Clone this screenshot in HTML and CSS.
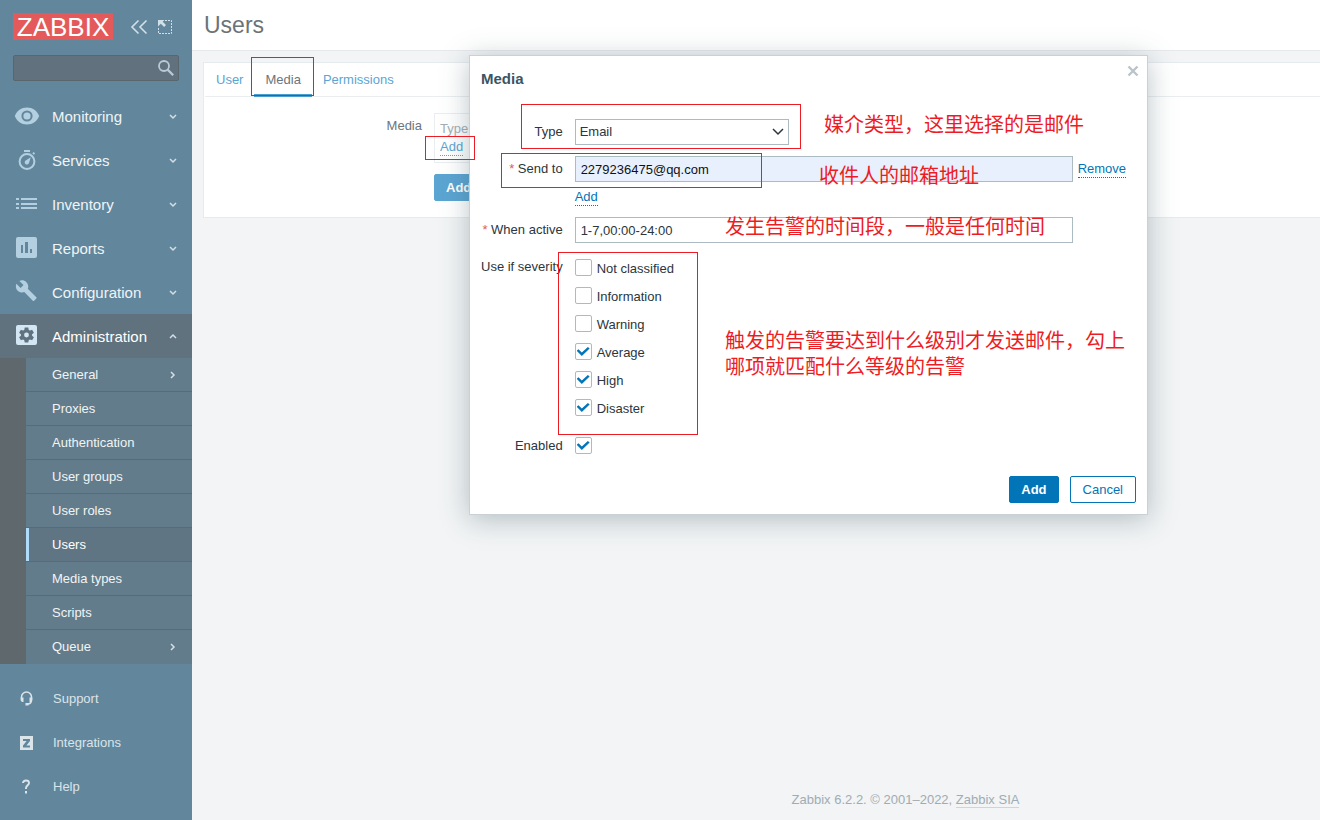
FILE: index.html
```html
<!DOCTYPE html>
<html lang="en">
<head>
<meta charset="utf-8">
<title>Users</title>
<link rel="stylesheet" href="styles.css">
</head>
<body>
<div class="layout">
  <aside class="sidebar">
    <div class="brand">
      <a class="logo" href="#">ZABBIX</a>
      <button class="icon-btn" type="button" aria-label="Collapse sidebar">
        <svg width="18" height="16" viewBox="0 0 18 16" fill="none" stroke="currentColor" stroke-width="1.600"><path d="M8.500 1.500 2 8l6.500 6.500M16.500 1.500 10 8l6.500 6.500"/></svg>
      </button>
      <button class="icon-btn" type="button" aria-label="Hide sidebar">
        <svg width="16" height="16" viewBox="0 0 16 16" fill="none" stroke="currentColor"><path stroke-dasharray="2 1" d="M8 1.500h6.500v13h-13V8"/><path fill="currentColor" stroke="none" d="M1 1h6.500L5.700 2.800l3.300 3.300L7.100 8 3.800 4.700 1 7.500z"/></svg>
      </button>
    </div>
    <form class="search" role="search">
      <input type="text" aria-label="Search">
      <button type="button" aria-label="Search">
        <svg width="18" height="18" viewBox="0 0 18 18" fill="none" stroke="currentColor" stroke-width="1.800"><circle cx="7" cy="7" r="5"/><path d="m10.600 10.600 5.600 5.600" stroke-width="2.200"/></svg>
      </button>
    </form>
    <nav class="menu">
      <a class="menu-item" href="#">
        <svg class="ico" width="26" height="20" viewBox="0 0 26 20"><path fill="currentColor" fill-rule="evenodd" d="M13 1.500C7.500 1.500 2.700 4.900.8 10c1.900 5.100 6.700 8.500 12.200 8.500S23.300 15.100 25.200 10C23.300 4.900 18.500 1.500 13 1.500zm0 2.900a5.600 5.600 0 1 1 0 11.200 5.600 5.600 0 0 1 0-11.200z"/><circle cx="13" cy="10" r="3.600" fill="currentColor"/></svg>
        <span>Monitoring</span><svg class="chev" width="10" height="10" viewBox="0 0 10 10"><path d="m2 4 3 3 3-3"/></svg>
      </a>
      <a class="menu-item" href="#">
        <svg class="ico" width="26" height="22" viewBox="0 0 26 22"><circle cx="13" cy="12.500" r="7.400" fill="none" stroke="currentColor" stroke-width="2"/><path fill="currentColor" d="M10 1h6v2h-6zM18.300 4.200l1.400-1.200 1.400 1.600-1.300 1.200zM16.800 8.200l-1.900 6a2.200 2.200 0 1 1-3.300-2.700z"/></svg>
        <span>Services</span><svg class="chev" width="10" height="10" viewBox="0 0 10 10"><path d="m2 4 3 3 3-3"/></svg>
      </a>
      <a class="menu-item" href="#">
        <svg class="ico" width="26" height="20" viewBox="0 0 26 20"><path fill="currentColor" d="M2 4h3v2H2zM2 9h3v2H2zM2 13h3v2H2zM7 4h16v2H7zM7 9h16v2H7zM7 13h16v2H7z"/></svg>
        <span>Inventory</span><svg class="chev" width="10" height="10" viewBox="0 0 10 10"><path d="m2 4 3 3 3-3"/></svg>
      </a>
      <a class="menu-item" href="#">
        <svg class="ico" width="26" height="24" viewBox="0 0 26 24"><path fill="currentColor" fill-rule="evenodd" d="M4 1h17a2 2 0 0 1 2 2v17a2 2 0 0 1-2 2H4a2 2 0 0 1-2-2V3a2 2 0 0 1 2-2zm3 8v8h2V9zm4-3v11h3V6zm5 7v4h2v-4z"/></svg>
        <span>Reports</span><svg class="chev" width="10" height="10" viewBox="0 0 10 10"><path d="m2 4 3 3 3-3"/></svg>
      </a>
      <a class="menu-item" href="#">
        <svg class="ico" width="26" height="24" viewBox="0 0 26 24"><path fill="currentColor" d="m22.300 17.300-8.500-8.500c.9-2.300.4-4.800-1.400-6.600C10.500.3 7.700-.1 5.400.9l4.100 4.100-2.900 2.900-4.200-4.200C1.400 6 1.800 8.900 3.700 10.700c1.800 1.800 4.400 2.300 6.600 1.400l8.500 8.600c.4.400 1 .4 1.300 0l2.200-2.200c.4-.3.400-.9 0-1.200z"/></svg>
        <span>Configuration</span><svg class="chev" width="10" height="10" viewBox="0 0 10 10"><path d="m2 4 3 3 3-3"/></svg>
      </a>
      <a class="menu-item menu-item-open" href="#">
        <svg class="ico" width="26" height="24" viewBox="1 0 26 24"><rect x="3" y="1" width="21" height="20" rx="2" fill="currentColor"/><g class="gear"><circle cx="13.500" cy="11" r="5.600"/><path d="M11.700 3.500h3.600l.6 3.500h-4.800zM11.700 18.500h3.600l.6-3.500h-4.800zM6.100 8.800l1.800-3.100 3.400 1.300-2.500 4.100zM20.900 8.800l-1.800-3.100L15.700 7l2.500 4.100zM6.100 13.200l1.800 3.100 3.400-1.300-2.500-4.100zM20.900 13.200l-1.800 3.100-3.400-1.300 2.500-4.100z"/></g><circle cx="13.500" cy="11" r="2.400" fill="currentColor"/></svg>
        <span>Administration</span><svg class="chev" width="10" height="10" viewBox="0 0 10 10"><path d="m2 7 3-3 3 3"/></svg>
      </a>
      <div class="submenu">
        <a href="#">General<svg class="chev" width="10" height="10" viewBox="0 0 10 10"><path d="m3 2 3 3-3 3"/></svg></a>
        <a href="#">Proxies</a>
        <a href="#">Authentication</a>
        <a href="#">User groups</a>
        <a href="#">User roles</a>
        <a class="current" href="#">Users</a>
        <a href="#">Media types</a>
        <a href="#">Scripts</a>
        <a href="#">Queue<svg class="chev" width="10" height="10" viewBox="0 0 10 10"><path d="m3 2 3 3-3 3"/></svg></a>
      </div>
    </nav>
    <nav class="links">
      <a href="#"><svg width="14" height="16" viewBox="0 0 14 16"><path fill="none" stroke="currentColor" stroke-width="1.500" d="M1.500 8.500V6a5 5 0 0 1 10 0v2.500c0 3-1.500 4.500-4 4.500"/><path fill="currentColor" d="M.7 6.500h2.800V11H2L.7 9.500zM12.300 6.500H9.500V11H11l1.300-1.500zM5.500 12h3v2.500h-3z"/></svg>Support</a>
      <a href="#"><svg width="14" height="16" viewBox="0 0 14 16"><path fill="currentColor" fill-rule="evenodd" d="M0 1h13v14H0zm3 3v2h3.600L3 10.600V12.500h7v-2H6.400L10 6V4z"/></svg>Integrations</a>
      <a href="#"><svg width="14" height="16" viewBox="0 0 14 16"><path fill="none" stroke="currentColor" stroke-width="1.900" d="M3 4c0-2 1.500-2.500 3-2.500s3 .6 3 2.400C9 6 6 6.500 6 9v1"/><path fill="currentColor" d="M5 12h2v2.500H5z"/></svg>Help</a>
    </nav>
  </aside>

  <main class="page">
    <header class="page-head"><h1>Users</h1></header>
    <section class="card">
      <nav class="tabs">
        <a href="#">User</a>
        <a class="active" href="#">Media</a>
        <a href="#">Permissions</a>
      </nav>
      <div class="card-form">
        <span class="card-label">Media</span>
        <div class="media-box">
          <table><tr><th scope="col">Type</th></tr></table>
          <a class="dotted" href="#">Add</a>
        </div>
        <button class="btn btn-dim" type="button">Add</button>
      </div>
    </section>
    <footer class="page-foot">Zabbix 6.2.2. © 2001–2022, <a href="#">Zabbix SIA</a></footer>
  </main>
</div>

<div class="dialog" role="dialog" aria-labelledby="dialog-title">
  <div class="dialog-head">
    <h2 id="dialog-title">Media</h2>
    <button type="button" class="close" aria-label="Close"><svg width="12" height="12" viewBox="0 0 12 12" fill="none" stroke="currentColor" stroke-width="2.400"><path d="m1.500 1.500 9 9M10.500 1.500l-9 9"/></svg></button>
  </div>
  <form class="fields">
    <label for="type">Type</label>
    <div class="select">
      <select id="type"><option>Email</option></select>
      <svg width="12" height="8" viewBox="0 0 12 8" fill="none" stroke="currentColor" stroke-width="1.500"><path d="m1 1 5 5 5-5"/></svg>
    </div>

    <label class="required" for="sendto">Send to</label>
    <div>
      <div class="send-row"><input id="sendto" class="text filled" type="text" value="2279236475@qq.com"><a class="dotted" href="#">Remove</a></div>
      <div class="add-row"><a class="dotted" href="#">Add</a></div>
    </div>

    <label class="required" for="active">When active</label>
    <input id="active" class="text" type="text" value="1-7,00:00-24:00">

    <span class="field-label" id="severity">Use if severity</span>
    <div class="checks" role="group" aria-labelledby="severity">
      <label><input type="checkbox">Not classified</label>
      <label><input type="checkbox">Information</label>
      <label><input type="checkbox">Warning</label>
      <label><input type="checkbox" checked>Average</label>
      <label><input type="checkbox" checked>High</label>
      <label><input type="checkbox" checked>Disaster</label>
    </div>

    <label for="enabled">Enabled</label>
    <div class="check-cell"><input id="enabled" type="checkbox" checked></div>
  </form>
  <div class="dialog-foot">
    <button class="btn" type="button">Add</button>
    <button class="btn btn-alt" type="button">Cancel</button>
  </div>
</div>

<div class="notes" lang="zh-CN">
  <i class="frame frame-tab"></i>
  <i class="frame frame-add"></i>
  <i class="frame frame-type"></i>
  <i class="frame frame-send"></i>
  <i class="frame frame-severity"></i>
  <p class="note note-type">媒介类型，这里选择的是邮件</p>
  <p class="note note-send">收件人的邮箱地址</p>
  <p class="note note-active">发生告警的时间段，一般是任何时间</p>
  <p class="note note-severity">触发的告警要达到什么级别才发送邮件，勾上<br>哪项就匹配什么等级的告警</p>
</div>
</body>
</html>
```
FILE: styles.css
```css
* { box-sizing: border-box; }

body {
  margin: 0;
  position: relative;
  font: 13px/16px "Liberation Sans", Arial, sans-serif;
  color: #2b363d;
  background: #f2f4f5;
}

a { color: inherit; text-decoration: none; }
button, input, select { font: inherit; color: inherit; }
button { cursor: pointer; }
svg { display: block; flex: none; }
h1, h2, p { margin: 0; }

.layout { display: flex; min-height: 100vh; }

/* Sidebar */
.sidebar {
  display: flex;
  flex-direction: column;
  flex: none;
  width: 192px;
  background: #62879d;
  color: #f0f4f6;
}

.brand { display: flex; align-items: center; gap: 9px; padding: 13px 0 0 13px; }

.logo {
  flex: none;
  width: 100px;
  height: 27px;
  margin-right: 8px;
  background: #e45959;
  color: #fff;
  font-size: 26px;
  line-height: 28px;
  text-align: center;
}

.icon-btn {
  padding: 0;
  border: 0;
  background: none;
  color: #d3dfe7;
}

.search {
  display: flex;
  align-items: center;
  height: 26px;
  margin: 15px 13px 13px;
  border: 1px solid #5a666d;
  border-radius: 2px;
  background: #61727e;
}

.search input { flex: 1; min-width: 0; border: 0; background: none; outline: 0; }
.search button { padding: 0 3px; border: 0; background: none; color: #b9cbd6; }

.menu-item {
  display: flex;
  align-items: center;
  height: 44px;
  padding: 0 14px;
  font-size: 15px;
}

.menu-item span { flex: 1; margin-left: 12px; padding-top: 2px; }
.ico { color: #b3cfe0; }
.chev { fill: none; stroke: #d3dfe7; stroke-width: 1.5; }
.menu-item-open { background: #61727f; color: #fff; }
.menu-item-open .ico { color: #d3e6f3; }
.gear { fill: #61727f; }

.submenu { border-left: 26px solid #5e686d; }

.submenu a {
  display: flex;
  align-items: center;
  justify-content: space-between;
  height: 34px;
  padding: 0 14px 0 26px;
  border-bottom: 1px solid #5f696e;
  background: #637c8b;
}

.submenu a:last-child { border-bottom: 0; }
.submenu .current { box-shadow: inset 3px 0 #b0dcfa; background: #607583; color: #fff; }

.links { margin-top: auto; padding-bottom: 11px; color: #dbe4e9; }

.links a {
  display: flex;
  align-items: center;
  gap: 19px;
  height: 44px;
  padding-left: 20px;
}

/* Page */
.page { display: flex; flex-direction: column; flex: 1; min-width: 0; }

.page-head {
  height: 51px;
  padding: 11px 12px;
  border-bottom: 1px solid #e6e9eb;
  background: #fff;
}

.page-head h1 { font-size: 23px; line-height: 28px; font-weight: 400; color: #6a7379; }

.card {
  margin: 11px 0 0 11px;
  padding-bottom: 16px;
  border: 1px solid #e6ebed;
  border-right: 0;
  background: #fff;
}

.tabs {
  display: flex;
  margin-left: 1px;
  border-bottom: 1px solid #ebeef0;
  color: #5ba5d2;
}

.tabs a { height: 34px; padding: 0 11px; line-height: 34px; margin-bottom: -1px; }
.tabs .active { border-bottom: 3px solid #4a9fd1; color: #6c757b; }

.card-form {
  display: grid;
  grid-template-columns: 218px 1fr;
  column-gap: 12px;
  row-gap: 11px;
  padding-top: 16px;
}

.card-label { padding-top: 5px; text-align: right; color: #6c757b; }

.media-box { width: 600px; height: 50px; padding: 7px 5px; border: 1px solid #ebeef0; }
.media-box table { border-collapse: collapse; }
.media-box th { padding: 0 0 2px; font-weight: 400; color: #a4aeb5; }
.media-box .dotted { display: inline-block; color: #5ba5d2; }
.card-form .btn { grid-column: 2; justify-self: start; }

.dotted { border-bottom: 1px dotted currentColor; }

.btn {
  height: 27px;
  padding: 0 11px;
  border: 1px solid #0275b8;
  border-radius: 2px;
  background: #0275b8;
  color: #fff;
  font-weight: 700;
}

.btn-dim { border-color: #5ba5d2; background: #5ba5d2; }
.btn-alt { padding: 0 12px; background: #fff; color: #0275b8; font-weight: 400; }

.page-foot { margin-top: auto; padding: 0 0 12px 299px; text-align: center; color: #a0acb4; }
.page-foot a { border-bottom: 1px solid #ccd5d9; }

/* Dialog */
.dialog {
  position: absolute;
  top: 55px;
  left: 469px;
  width: 679px;
  padding: 12px 11px 11px;
  border: 1px solid #c9d1d6;
  background: #fff;
  box-shadow: 0 4px 26px rgba(60, 85, 98, 0.35);
}

.dialog-head { display: flex; justify-content: space-between; align-items: start; height: 51px; }
.dialog-head h2 { font-size: 15px; line-height: 22px; color: #3c5563; }
.close { margin-right: -6px; padding: 0 3px; border: 0; background: none; color: #b9c4cb; line-height: 0; }
.close svg { margin-top: -3px; }

.fields { display: grid; grid-template-columns: max-content 1fr; gap: 11px 12px; }
.fields > label, .field-label { text-align: right; line-height: 26px; }
.required::before { content: "* "; color: #e45959; }

.select { position: relative; width: 214px; height: 26px; }
.select select { appearance: none; width: 100%; height: 100%; padding: 0 4px; border: 1px solid #acbbc2; border-radius: 0; background: #fff; }
.select svg { position: absolute; top: 9px; right: 5px; pointer-events: none; }

.send-row { display: flex; align-items: center; gap: 5px; }
.text { width: 498px; height: 26px; padding: 0 5px; border: 1px solid #acbbc2; background: #fff; }
.filled { background: #e8f0fe; color: #111; }
.fields .dotted { color: #0275b8; }
.add-row { display: flex; padding-top: 7px; }

.checks label { display: flex; align-items: flex-start; gap: 5px; height: 28px; line-height: 30px; }

input[type="checkbox"] {
  appearance: none;
  display: block;
  width: 17px;
  height: 17px;
  margin: 0;
  border: 1px solid #acbbc2;
  border-radius: 2px;
  background: #fff;
}

.checks input[type="checkbox"] { margin-top: 5px; }

input[type="checkbox"]:checked::before {
  content: "";
  display: block;
  width: 13px;
  height: 9px;
  margin: 3px 1px;
  background: #0275b8;
  clip-path: polygon(0 42%, 14% 24%, 40% 62%, 86% 0, 100% 16%, 40% 100%);
}

.check-cell { height: 26px; padding-top: 4px; }
.dialog-foot { display: flex; justify-content: flex-end; gap: 11px; margin-top: 17px; }

/* Annotations drawn over the interface */
.frame { position: absolute; border: 1px solid #ed1c24; }
.frame-tab { left: 251px; top: 57px; width: 63px; height: 39px; }
.frame-add { left: 425px; top: 136px; width: 50px; height: 24px; }
.frame-type { left: 521px; top: 104px; width: 280px; height: 45px; }
.frame-send { left: 501px; top: 153px; width: 261px; height: 35px; }
.frame-severity { left: 558px; top: 252px; width: 140px; height: 183px; }

.note {
  position: absolute;
  font: 20px/26px "Noto Sans CJK SC", sans-serif;
  color: #ed1c24;
  white-space: nowrap;
}

.note-type { left: 824px; top: 111px; }
.note-send { left: 819px; top: 162px; }
.note-active { left: 725px; top: 213px; }
.note-severity { left: 725px; top: 327px; }
```
